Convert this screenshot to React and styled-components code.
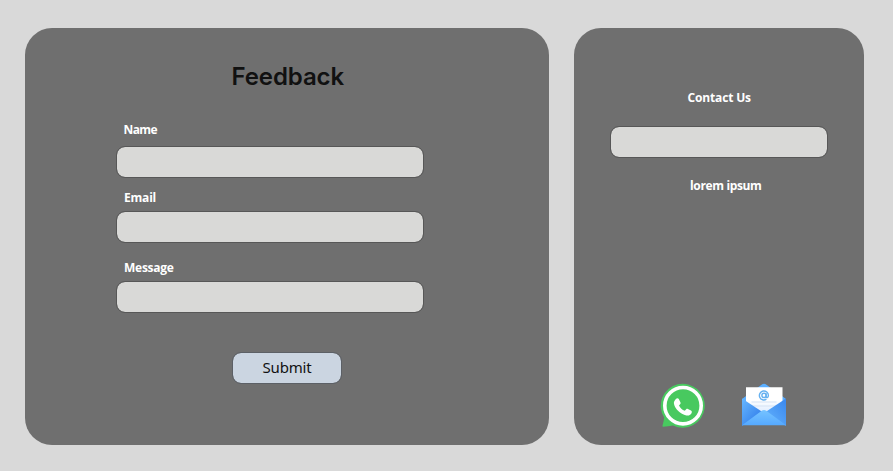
import React from 'react';
import styled, { createGlobalStyle } from 'styled-components';

const GlobalStyle = createGlobalStyle`
  * { box-sizing: border-box; }
  body { margin: 0; background: #d9d9d9; font-family: "Open Sans", "Noto Sans", sans-serif; }
`;

const Page = styled.main`
  display: grid;
  grid-template-columns: 524.4px 290px;
  grid-template-rows: 417px;
  column-gap: 24.6px;
  width: 893px;
  height: 471px;
  padding: 28px 0 0 25px;
`;

const Panel = styled.section`
  display: flex;
  flex-direction: column;
  border-radius: 27px;
  background: #6f6f6f;
`;

const FeedbackPanel = styled(Panel)`
  padding: 33px 0 0 91px;
`;

const ContactPanel = styled(Panel)`
  padding: 61px 36px 0;
`;

const Title = styled.h1`
  margin: 0 0 0 115.5px;
  height: 32px;
  font: 600 24px/32px Inter, sans-serif;
  letter-spacing: -0.1px;
  color: #111;
`;

const Form = styled.form`
  display: flex;
  flex-direction: column;
  padding-top: 28px;
`;

const Field = styled.div`
  display: flex;
  flex-direction: column;
  gap: ${(p) => p.$gap}px;
  height: ${(p) => p.$height}px;
`;

const Label = styled.label`
  height: 18px;
  padding-left: ${(p) => p.$indent}px;
  font-size: 12px;
  font-weight: 700;
  line-height: 18px;
  letter-spacing: ${(p) => p.$tracking}px;
  color: #fff;
  white-space: nowrap;
`;

const Note = styled(Label).attrs({ as: 'p' })`
  margin: 0;
`;

const Input = styled.input`
  display: block;
  width: ${(p) => p.$width}px;
  height: 32px;
  margin: 0;
  padding: 0 10px;
  border: 1px solid #575757;
  border-radius: 9px;
  background: #d9d9d7;
  background-clip: padding-box;
  outline: none;
`;

const Submit = styled.button`
  width: 110px;
  height: 32px;
  margin: 0 0 0 116px;
  padding: 0 0 2px;
  border: 1px solid #5c6066;
  border-radius: 9px;
  background: #cbd5e1;
  background-clip: padding-box;
  color: #111;
  font: 400 15px/28px "Noto Sans", sans-serif;
  letter-spacing: -0.2px;
`;

const Channels = styled.nav`
  display: flex;
  gap: 35px;
  margin-top: 188px;
  padding-left: 50px;
`;

const Icon = styled.svg`
  display: block;
  width: 46px;
  height: 46px;
`;

function WhatsAppIcon() {
  return (
    <Icon viewBox="0 0 46 46" aria-label="WhatsApp">
      <path d="M4.2 34.5A22 22 0 1 1 13 42.4Q8 43.4 3.4 43.7 2 43.6 2.6 42.2 3.8 38.5 4.2 34.5Z" fill="#48c95f" />
      <circle cx="23" cy="22.7" r="18.2" fill="none" stroke="#fff" strokeWidth="3.6" />
      <path
        d="M16.1 15.8c.8-.8 2.2-.7 2.7.3l1.7 3.4c.3.6.1 1.2-.4 1.7l-1.1 1.2c1.3 2.5 3.1 4.2 5.8 5.4l1.4-1.6c.5-.5 1-.6 1.7-.3l3.1 1.7c.9.5 1 1.2.7 2.1-.7 2.1-3 3.2-5.3 2.7-6.2-1.4-11.2-6-12.4-11.3-.5-2.2.6-3.8 2.1-5.3Z"
        fill="#fff"
      />
    </Icon>
  );
}

function MailIcon() {
  return (
    <Icon viewBox="0 0 46 46" aria-label="Email">
      <defs>
        <linearGradient id="pocket" x1="0" y1="0" x2="1" y2="1">
          <stop offset="0" stopColor="#67b7ff" />
          <stop offset="0.7" stopColor="#3986ed" />
        </linearGradient>
        <linearGradient id="pocketRight" x1="1" y1="0" x2="0" y2="1">
          <stop offset="0" stopColor="#3986ed" />
          <stop offset="1" stopColor="#67b7ff" />
        </linearGradient>
        <linearGradient id="front" x1="0" y1="0" x2="0" y2="1">
          <stop offset="0" stopColor="#76c3ff" />
          <stop offset="1" stopColor="#55a9ff" />
        </linearGradient>
        <linearGradient id="paper" x1="0" y1="0" x2="0" y2="1">
          <stop offset="0.5" stopColor="#fff" />
          <stop offset="1" stopColor="#dcebff" />
        </linearGradient>
      </defs>
      <path d="M1 16 20.5 1.7q2.5-2 5 0L45 16v8H1Z" fill="#5aaeff" />
      <path d="M5 4.2h36.5V30H5Z" fill="url(#paper)" />
      <path d="M10.5 19h25M10.5 23h25" stroke="#d5e2f3" strokeWidth="1" />
      <g fill="none" stroke="#66b1f0" strokeWidth="1.4">
        <circle cx="23" cy="12.4" r="2.1" />
        <path d="M25.1 10.2v3.2c0 1.9 2.3 1.4 2.3-.9a4.5 4.5 0 1 0-2 3.7" />
      </g>
      <path d="M1 15.5 23 30 1 43Z" fill="url(#pocket)" />
      <path d="M45 15.5 23 30l22 13Z" fill="url(#pocketRight)" />
      <path d="M1 42.3 20.7 27.8q2.3-1.8 4.6 0L45 42.3Z" fill="url(#front)" />
    </Icon>
  );
}

export default function App() {
  return (
    <>
      <GlobalStyle />
      <Page>
        <FeedbackPanel>
          <Title>Feedback</Title>
          <Form>
            <Field $height={68} $gap={7}>
              <Label htmlFor="name" $indent={7.5} $tracking={-0.6}>Name</Label>
              <Input id="name" $width={308} />
            </Field>
            <Field $height={70} $gap={4}>
              <Label htmlFor="email" $indent={8} $tracking={-0.2}>Email</Label>
              <Input id="email" $width={308} />
            </Field>
            <Field $height={93} $gap={4}>
              <Label htmlFor="message" $indent={8} $tracking={-0.25}>Message</Label>
              <Input id="message" $width={308} />
            </Field>
            <Submit type="button">Submit</Submit>
          </Form>
        </FeedbackPanel>
        <ContactPanel>
          <Field $height={88} $gap={19}>
            <Label htmlFor="contact" $indent={77.5} $tracking={-0.15}>Contact Us</Label>
            <Input id="contact" $width={218} />
          </Field>
          <Note $indent={80} $tracking={-0.35}>lorem ipsum</Note>
          <Channels>
            <WhatsAppIcon />
            <MailIcon />
          </Channels>
        </ContactPanel>
      </Page>
    </>
  );
}
